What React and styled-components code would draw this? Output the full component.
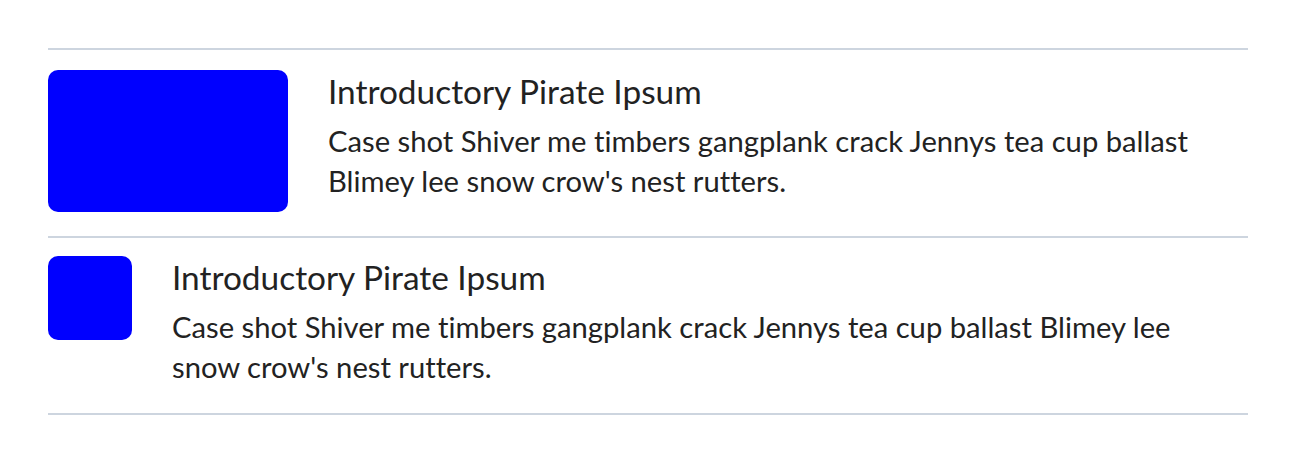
import React from 'react'
import styled, { createGlobalStyle } from 'styled-components'

const GlobalStyle = createGlobalStyle`
    body {
        margin: 0;
        background: #ffffff;
        font-family: Lato, "Noto Sans", sans-serif;
        color: #222222;
        font-variant-ligatures: none;
    }
`

const items = [
    {
        id: 1,
        size: 'large',
        title: 'Introductory Pirate Ipsum',
        text: "Case shot Shiver me timbers gangplank crack Jennys tea cup ballast Blimey lee snow crow's nest rutters.",
    },
    {
        id: 2,
        size: 'small',
        title: 'Introductory Pirate Ipsum',
        text: "Case shot Shiver me timbers gangplank crack Jennys tea cup ballast Blimey lee snow crow's nest rutters.",
    },
]

export default function App() {
    return (
        <>
            <GlobalStyle />
            <Page>
                <List>
                    {items.map((item) => (
                        <Item key={item.id} $size={item.size}>
                            <Thumb $size={item.size} />
                            <Content>
                                <Title>{item.title}</Title>
                                <Body>{item.text}</Body>
                            </Content>
                        </Item>
                    ))}
                </List>
            </Page>
        </>
    )
}

const Page = styled.div`
    padding: 48px;
`

const List = styled.ul`
    list-style: none;
    margin: 0;
    padding: 0;
    border-top: 2px solid #cdd5df;
`

const Item = styled.li`
    display: flex;
    align-items: flex-start;
    gap: 40px;
    padding: ${(p) => (p.$size === 'large' ? '20px 24px 24px 0' : '18px 24px 26px 0')};
    border-bottom: 2px solid #cdd5df;
`

const Thumb = styled.div`
    flex-shrink: 0;
    background: #0000ff;
    border-radius: 10px;
    width: ${(p) => (p.$size === 'large' ? '240px' : '84px')};
    height: ${(p) => (p.$size === 'large' ? '142px' : '84px')};
`

const Content = styled.div`
    flex: 1;
    min-width: 0;
`

const Title = styled.h3`
    margin: 0 0 8px;
    font-size: 33.4px;
    line-height: 43px;
    font-weight: 400;
`

const Body = styled.p`
    margin: 0;
    font-size: 29.2px;
    line-height: 40px;
`
